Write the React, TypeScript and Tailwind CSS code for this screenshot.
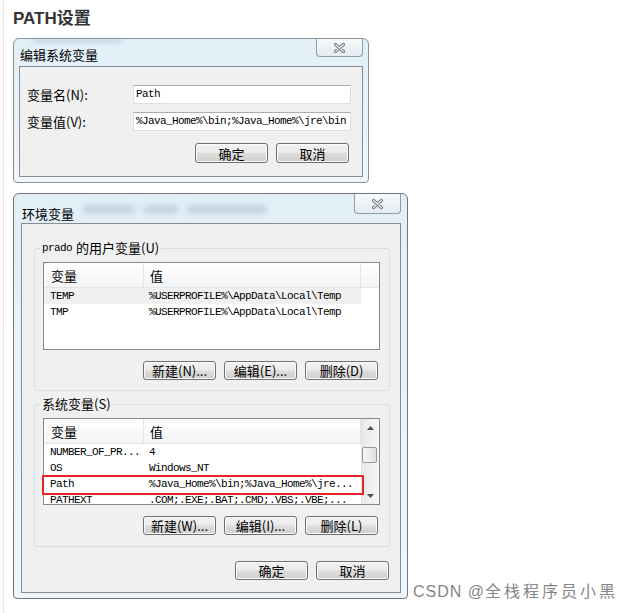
import React from 'react';

const cjk = "font-['Noto_Sans_CJK_SC','Liberation_Sans',sans-serif]";
const mono = "font-['Liberation_Mono','Noto_Sans_CJK_SC',monospace] text-[11px] tracking-[-0.6px]";

const btnBase =
  "flex items-center justify-center rounded-[3px] border border-[#707070] bg-[linear-gradient(to_bottom,#f2f2f2_0%,#ebebeb_48%,#dddddd_52%,#cfcfcf_100%)] shadow-[inset_0_0_0_1px_#fbfbfb] text-[13px] leading-none text-black";

function Btn({ children, className = '' }: { children: React.ReactNode; className?: string }) {
  return <div className={`${btnBase} ${className}`}>{children}</div>;
}

function CloseBtn({ className }: { className: string }) {
  return (
    <div
      className={`absolute top-0 flex items-center justify-center rounded-b-[4px] border border-t-0 border-[#8f9ba7] bg-[linear-gradient(to_bottom,#f6f9fb,#e4ecf2)] ${className}`}
    >
      <svg width="13" height="10" viewBox="0 0 13 10">
        <path d="M2.5 1.5 L10.5 8.5 M10.5 1.5 L2.5 8.5" stroke="#737373" strokeWidth="3" strokeLinecap="round" />
        <path d="M2.5 1.5 L10.5 8.5 M10.5 1.5 L2.5 8.5" stroke="#f5f5f5" strokeWidth="1.1" strokeLinecap="round" />
      </svg>
    </div>
  );
}

function ScrollBar() {
  return (
    <div className="flex w-[18px] flex-col border-l border-[#e3e3e3] bg-[linear-gradient(to_right,#e8e8e8,#f6f6f6)]">
      <div className="flex h-[17px] items-center justify-center">
        <svg width="7" height="4" viewBox="0 0 7 4">
          <path d="M3.5 0 L7 4 L0 4 Z" fill="#4f4f4f" />
        </svg>
      </div>
      <div className="flex-1 pt-[11px]">
        <div className="mr-[2px] h-[16px] rounded-[2px] border border-[#979797] bg-[linear-gradient(to_right,#f6f6f6,#e0e0e0)]" />
      </div>
      <div className="flex h-[17px] items-center justify-center">
        <svg width="7" height="4" viewBox="0 0 7 4">
          <path d="M0 0 L7 0 L3.5 4 Z" fill="#4f4f4f" />
        </svg>
      </div>
    </div>
  );
}

type Row = { name: string; value: string; selected?: boolean };

function ListView({
  rows,
  className,
  scroll = false,
  children,
}: {
  rows: Row[];
  className: string;
  scroll?: boolean;
  children?: React.ReactNode;
}) {
  return (
    <div className={`relative ${className}`}>
      <div className="flex h-full overflow-hidden border border-[#828790] bg-white">
        <div className={scroll ? 'w-[317px]' : 'flex-1'}>
          <div className={`flex h-[25px] border-b border-[#e5e5e5] bg-[linear-gradient(to_bottom,#ffffff,#f3f4f6)] text-[13px] leading-none text-black ${cjk}`}>
            <div className="flex w-[100px] items-center border-r border-[#e5e5e5] pl-[7px]">变量</div>
            <div className="flex w-[217px] items-center border-r border-[#e5e5e5] pl-[6px]">值</div>
          </div>
          {rows.map((r) => (
            <div
              key={r.name}
              className={`flex h-[16px] w-[317px] items-center whitespace-nowrap leading-[16px] text-black ${mono} ${r.selected ? 'bg-[#f0f0f0]' : ''}`}
            >
              <div className="w-[100px] pl-[6px]">{r.name}</div>
              <div className="pl-[5px]">{r.value}</div>
            </div>
          ))}
        </div>
        {scroll && <ScrollBar />}
      </div>
      {children}
    </div>
  );
}

const userRows: Row[] = [
  { name: 'TEMP', value: '%USERPROFILE%\\AppData\\Local\\Temp', selected: true },
  { name: 'TMP', value: '%USERPROFILE%\\AppData\\Local\\Temp' },
];

const sysRows: Row[] = [
  { name: 'NUMBER_OF_PR...', value: '4' },
  { name: 'OS', value: 'Windows_NT' },
  { name: 'Path', value: '%Java_Home%\\bin;%Java_Home%\\jre...' },
  { name: 'PATHEXT', value: '.COM;.EXE;.BAT;.CMD;.VBS;.VBE;...' },
];

function EditDialog() {
  return (
    <div className="relative mt-[9px] h-[145px] w-[356px] rounded-t-[6px] rounded-b-[4px] border border-[#8a9299] bg-[linear-gradient(to_bottom,#e2eff7,#eef6fb)] px-[5px]">
      <div className="pointer-events-none absolute left-[18px] top-[0px] h-[4px] w-[90px] rounded-full bg-[#7f97ad] opacity-30 blur-[2px]" />
      <div className="relative h-[27px] pl-[1px] pt-[3px]">
        <span className={`text-[13px] leading-[16px] text-black ${cjk}`}>编辑系统变量</span>
      </div>
      <CloseBtn className="right-[5px] h-[18px] w-[47px]" />
      <div className={`h-[111px] border border-[#898c95] bg-[#f0f0f0] pt-[18px] text-[13px] text-black ${cjk}`}>
        <div className="flex h-[19px] items-center">
          <div className="w-[113px] pl-[7px]">变量名(N):</div>
          <div className="flex h-[19px] w-[218px] items-center border border-[#dcdfe3] border-t-[#abadb3] bg-white pl-[2px]">
            <span className={mono}>Path</span>
          </div>
        </div>
        <div className="mt-[8px] flex h-[19px] items-center">
          <div className="w-[113px] pl-[7px]">变量值(V):</div>
          <div className="flex h-[19px] w-[218px] items-center overflow-hidden whitespace-nowrap border border-[#dcdfe3] border-t-[#abadb3] bg-white pl-[2px]">
            <span className={mono}>%Java_Home%\bin;%Java_Home%\jre\bin</span>
          </div>
        </div>
        <div className={`mt-[12px] flex justify-end gap-[8px] pr-[13px] ${cjk}`}>
          <Btn className="h-[20px] w-[73px]">确定</Btn>
          <Btn className="h-[20px] w-[73px]">取消</Btn>
        </div>
      </div>
    </div>
  );
}

function EnvDialog() {
  return (
    <div className="relative h-[406px] w-[395px] shrink-0 rounded-t-[6px] rounded-b-[4px] border border-[#6f767d] bg-[linear-gradient(to_bottom,#e2eff7,#eef6fb)] pl-[7px] pr-[6px]">
      <div className="relative h-[29px] pl-[1px] pt-[7px]">
        <div className="pointer-events-none absolute left-[62px] top-[12px] h-[7px] w-[52px] rounded-full bg-[#7f9ab3] opacity-40 blur-[3px]" />
        <div className="pointer-events-none absolute left-[122px] top-[12px] h-[7px] w-[36px] rounded-full bg-[#7f9ab3] opacity-40 blur-[3px]" />
        <div className="pointer-events-none absolute left-[166px] top-[12px] h-[7px] w-[80px] rounded-full bg-[#7f9ab3] opacity-40 blur-[3px]" />
        <span className={`relative text-[13px] leading-[16px] text-black ${cjk}`}>环境变量</span>
      </div>
      <CloseBtn className="right-[6px] h-[20px] w-[47px]" />
      <div className={`h-[370px] w-[380px] border border-[#898c95] bg-[#f0f0f0] pt-[16px] text-[13px] text-black ${cjk}`}>
        <fieldset className="ml-[12px] w-[356px] rounded-[3px] border border-[#d5dfe5] pb-[10px]">
          <legend className="ml-[5px] flex h-[16px] items-center px-[2px] leading-[16px]">
            <span className={mono}>prado</span>
            <span className="ml-[4px]">的用户变量(U)</span>
          </legend>
          <ListView rows={userRows} className="ml-[8px] mt-[6px] h-[88px] w-[337px]" />
          <div className="mt-[11px] flex justify-end gap-[8px] pr-[11px]">
            <Btn className="h-[19px] w-[73px]">新建(N)...</Btn>
            <Btn className="h-[19px] w-[73px]">编辑(E)...</Btn>
            <Btn className="h-[19px] w-[73px]">删除(D)</Btn>
          </div>
        </fieldset>
        <fieldset className="ml-[12px] mt-[5px] w-[356px] rounded-[3px] border border-[#d5dfe5] pb-[11px]">
          <legend className="ml-[5px] flex h-[16px] items-center px-[2px] leading-[16px]">系统变量(S)</legend>
          <ListView rows={sysRows} scroll className="ml-[8px] mt-[6px] h-[87px] w-[337px]">
            <div className="pointer-events-none absolute left-[-1px] top-[57px] h-[20px] w-[322px] border-2 border-[#e3242b]" />
          </ListView>
          <div className="mt-[11px] flex justify-end gap-[8px] pr-[11px]">
            <Btn className="h-[19px] w-[73px]">新建(W)...</Btn>
            <Btn className="h-[19px] w-[73px]">编辑(I)...</Btn>
            <Btn className="h-[19px] w-[73px]">删除(L)</Btn>
          </div>
        </fieldset>
        <div className="mt-[14px] flex justify-end gap-[8px] pr-[11px]">
          <Btn className="h-[19px] w-[73px]">确定</Btn>
          <Btn className="h-[19px] w-[73px]">取消</Btn>
        </div>
      </div>
    </div>
  );
}

export default function App() {
  return (
    <div className="h-[613px] w-[639px] overflow-hidden bg-white pl-[3px]">
      <div className="h-full border-l border-[#e8e8e8] pl-[9px] pt-[9px]">
        <h1 className="h-[20px] font-['Liberation_Sans','Noto_Sans_CJK_SC',sans-serif] text-[17px] font-bold leading-[20px] text-[#333333]">
          PATH设置
        </h1>
        <EditDialog />
        <div className="mt-[10px] flex items-start">
          <EnvDialog />
          <div className="ml-[5px] mt-[389px] whitespace-nowrap font-['Liberation_Sans','Noto_Sans_CJK_SC',sans-serif] text-[16px] leading-[20px] tracking-[1px] text-[#858585]">
            CSDN @<span className="tracking-[3px]">全栈程序员小黑</span>
          </div>
        </div>
      </div>
    </div>
  );
}
